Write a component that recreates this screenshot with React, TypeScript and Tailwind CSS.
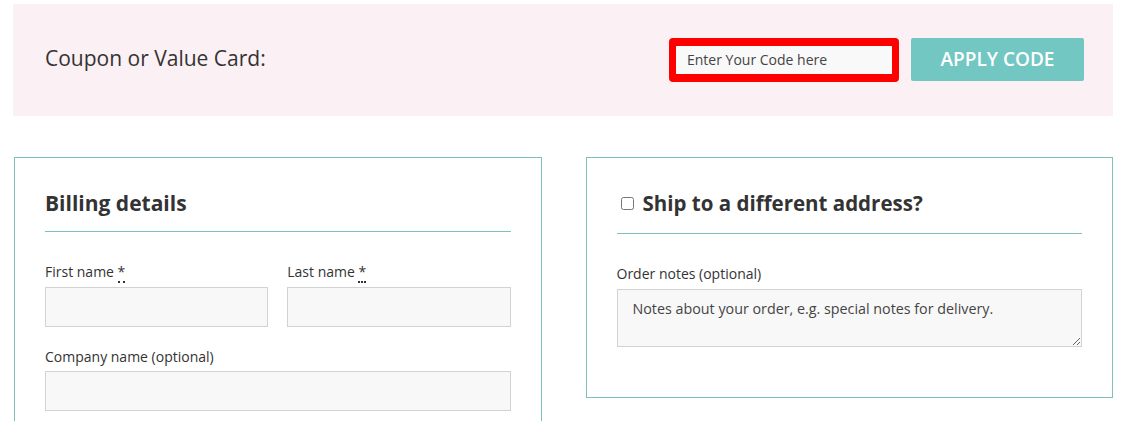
export default function App() {
  const font = { fontFamily: "'Open Sans', Lato, sans-serif" }
  return (
    <div className="w-[1125px] h-[421px] overflow-hidden bg-white text-[#333]" style={font}>
      <div className="w-[1100px] ml-[13px] pt-[4px]">
        {/* coupon band */}
        <div className="h-[112px] bg-[#fbf0f4] flex items-center justify-between pl-[32px] pr-[29px]">
          <h2 className="text-[21px] text-[#333] pb-[3px]">Coupon or Value Card:</h2>
          <div className="flex items-center gap-[12px] pb-[1px]">
            <div className="border-x-[7px] border-y-[8px] border-[#ff0000] rounded-[4px]">
              <input
                type="text"
                placeholder="Enter Your Code here"
                className="block w-[216px] h-[28px] bg-[#f9f9f9] px-[11px] text-[14px] text-[#444] placeholder:text-[#444] outline-none"
              />
            </div>
            <button className="w-[173px] h-[43px] bg-[#72c7c3] rounded-[2px] text-white text-[19px] font-semibold">
              APPLY CODE
            </button>
          </div>
        </div>

        <div className="mt-[41px] flex gap-[44px] items-start">
          {/* billing */}
          <div className="ml-[1px] w-[528px] h-[300px] border border-[#7fc0b8] px-[30px] pt-[30px]">
            <h3 className="text-[21px] font-bold leading-[30px] pb-[13px] border-b border-[#7fc0b8]">Billing details</h3>
            <div className="mt-[30px] grid grid-cols-2 gap-x-[19px]">
              <div>
                <label className="block text-[14px] leading-[20px]">
                  First name <abbr className="text-[#333] no-underline border-b-2 border-dotted border-[#333]">*</abbr>
                </label>
                <input className="mt-[5px] block w-full h-[40px] bg-[#f8f8f8] border border-[#d2d2d2]" />
              </div>
              <div>
                <label className="block text-[14px] leading-[20px]">
                  Last name <abbr className="text-[#333] no-underline border-b-2 border-dotted border-[#333]">*</abbr>
                </label>
                <input className="mt-[5px] block w-full h-[40px] bg-[#f8f8f8] border border-[#d2d2d2]" />
              </div>
            </div>
            <label className="mt-[20px] block text-[14px] leading-[20px]">Company name (optional)</label>
            <input className="mt-[4px] block w-full h-[40px] bg-[#f8f8f8] border border-[#d2d2d2]" />
          </div>

          {/* shipping */}
          <div className="w-[528px] h-[241px] border border-[#7fc0b8] px-[30px] pt-[30px]">
            <h3 className="flex items-center gap-[9px] text-[20.5px] font-bold leading-[30px] pb-[15px] border-b border-[#7fc0b8]">
              <input type="checkbox" className="ml-[4px] w-[13px] h-[13px]" />
              Ship to a different address?
            </h3>
            <label className="mt-[30px] block text-[14px] leading-[20px]">Order notes (optional)</label>
            <textarea
              placeholder="Notes about your order, e.g. special notes for delivery."
              className="mt-[5px] block w-full h-[58px] bg-[#f8f8f8] border border-[#d2d2d2] px-[15px] pt-[8px] text-[14.3px] text-[#444] placeholder:text-[#444] outline-none"
            />
          </div>
        </div>
      </div>
    </div>
  )
}
